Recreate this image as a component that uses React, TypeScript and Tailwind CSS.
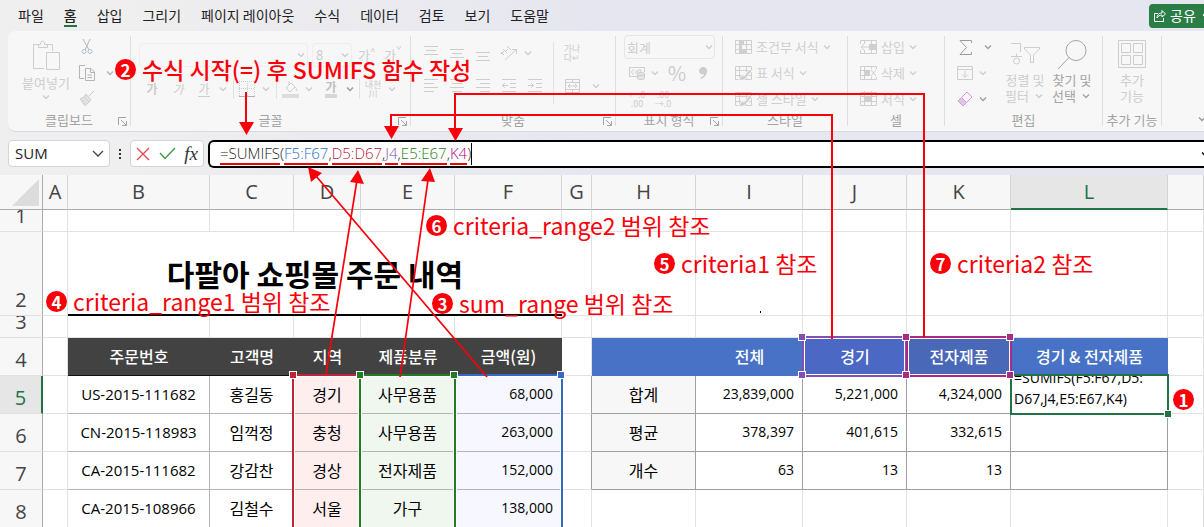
import type { ReactNode } from "react";

const menus = [
  "파일",
  "홈",
  "삽입",
  "그리기",
  "페이지 레이아웃",
  "수식",
  "데이터",
  "검토",
  "보기",
  "도움말",
];

const columns = [
  { name: "A", width: "w-[25px]" },
  { name: "B", width: "w-[142px]" },
  { name: "C", width: "w-[84px]" },
  { name: "D", width: "w-[67px]" },
  { name: "E", width: "w-[94px]" },
  { name: "F", width: "w-[107px]" },
  { name: "G", width: "w-[30px]" },
  { name: "H", width: "w-[104px]" },
  { name: "I", width: "w-[107px]" },
  { name: "J", width: "w-[104px]" },
  { name: "K", width: "w-[104px]" },
  { name: "L", width: "w-[157px]" },
  { name: "", width: "" },
];

const orders = [
  { id: "US-2015-111682", name: "홍길동", area: "경기", kind: "사무용품", price: "68,000" },
  { id: "CN-2015-118983", name: "임꺽정", area: "충청", kind: "사무용품", price: "263,000" },
  { id: "CA-2015-111682", name: "강감찬", area: "경상", kind: "전자제품", price: "152,000" },
  { id: "CA-2015-108966", name: "김철수", area: "서울", kind: "가구", price: "138,000" },
];

const summary = [
  { label: "합계", values: ["23,839,000", "5,221,000", "4,324,000"] },
  { label: "평균", values: ["378,397", "401,615", "332,615"] },
  { label: "개수", values: ["63", "13", "13"] },
];

/* ---------- ribbon ---------- */

function Chevron({ className = "" }: { className?: string }) {
  return (
    <svg
      className={`h-3 w-3 shrink-0 ${className}`}
      viewBox="0 0 12 12"
      fill="none"
      stroke="currentColor"
      strokeWidth={1.3}
    >
      <path d="M3 4.5L6 7.5L9 4.5" />
    </svg>
  );
}

function Icon({
  children,
  className = "h-[18px] w-[18px]",
  box = "0 0 18 18",
}: {
  children: ReactNode;
  className?: string;
  box?: string;
}) {
  return (
    <svg
      className={`shrink-0 ${className}`}
      viewBox={box}
      fill="none"
      stroke="currentColor"
      strokeWidth={1}
    >
      {children}
    </svg>
  );
}

function Tool({
  label,
  children,
  className = "",
}: {
  label: string;
  children: ReactNode;
  className?: string;
}) {
  return (
    <button
      aria-label={label}
      className={`flex h-[22px] w-[26px] shrink-0 items-center justify-center ${className}`}
    >
      {children}
    </button>
  );
}

function Group({
  title,
  width,
  launcher = false,
  children,
}: {
  title: string;
  width: string;
  launcher?: boolean;
  children: ReactNode;
}) {
  return (
    <section
      className={`flex h-[90px] shrink-0 flex-col justify-between border-r border-[#dedede] ${width}`}
    >
      <div className="flex h-[74px]">{children}</div>
      <div className="relative text-center text-[13px] leading-[13px] text-[#a3a3a3]">
        {title}
        {launcher && (
          <button aria-label={`${title} 설정`} className="absolute bottom-0 right-[3px]">
            <Icon className="h-[9px] w-[9px]" box="0 0 9 9">
              <path d="M0.5 8V0.5H8M3 3L8 8M8.5 4V8.5H4" />
            </Icon>
          </button>
        )}
      </div>
    </section>
  );
}

function Rule() {
  return <span className="h-[20px] w-px shrink-0 bg-[#e2e2e2]" />;
}

function Lines({ rows }: { rows: [number, number, number][] }) {
  return (
    <Icon className="h-[16px] w-[14px]" box="0 0 14 16">
      {rows.map(([y, from, to]) => (
        <path key={y} d={`M${from} ${y}.5H${to}`} />
      ))}
    </Icon>
  );
}

function TableIcon({ kind }: { kind: "rule" | "brush" | "insert" | "delete" | "format" }) {
  return (
    <Icon className="h-[16px] w-[17px]" box="0 0 17 16">
      <path d="M0.5 1.5H16.5V14.5H0.5ZM0.5 5.5H16.5M0.5 10.5H16.5M4.5 1.5V14.5M11.5 1.5V14.5" />
      {kind === "rule" && (
        <path fill="currentColor" stroke="none" d="M4 2h5v3H4zM4 6h3v4H4zM4 11h8v3H4z" />
      )}
      {kind === "brush" && (
        <path fill="currentColor" stroke="#f7f7f7" d="M4 15C5 11 7 10 9 11L15 4L17 6L11 13C10 15 7 16 4 15Z" />
      )}
      {kind === "insert" && (
        <>
          <path fill="#f7f7f7" stroke="none" d="M0 5h9v6H0z" />
          <path fill="currentColor" stroke="none" d="M9 6h8v4H9z" />
          <path d="M9 8H1M4 5L1 8L4 11" />
        </>
      )}
      {kind === "delete" && (
        <>
          <path fill="#f7f7f7" stroke="none" d="M9 4h8v8H9z" />
          <path fill="currentColor" stroke="none" d="M4 5h6v6H4z" />
          <path d="M11 5L16 11M16 5L11 11" />
        </>
      )}
      {kind === "format" && (
        <path fill="currentColor" stroke="none" d="M5 6h6v4H5zM4 0h1v3H4zM11 0h1v3h-1z" />
      )}
    </Icon>
  );
}

function StyleRow({
  kind,
  text,
}: {
  kind: "rule" | "brush" | "insert" | "delete" | "format";
  text: string;
}) {
  return (
    <button className="flex h-[22px] items-center text-[13px] text-[#cfcfcf]">
      <TableIcon kind={kind} />
      <span className="ml-1 whitespace-nowrap">{text}</span>
      <Chevron className="ml-[2px]" />
    </button>
  );
}

function Ribbon() {
  return (
    <div className="ml-2 flex h-[101px] overflow-hidden rounded-l-lg border-b border-[#d9d9e2] bg-[#f7f7f7] pt-[5px] text-[#cdcdcd]">
      <Group title="클립보드" width="w-[123px]" launcher>
        <button className="flex w-[76px] flex-col items-center pt-1">
          <Icon className="h-[31px] w-[28px]" box="0 0 28 31">
            <path d="M12 28.5H1.5V4.5H6M15 4.5H20.5V11M6.5 7.5V4.5H8.5C8 0 13 0 12.5 4.5H15.5V7.5Z" />
            <path d="M14.5 12.5H27.5V29.5H14.5Z" />
          </Icon>
          <span className="mt-1 text-[13px] leading-4">붙여넣기</span>
          <Chevron />
        </button>
        <div className="-ml-[10px] flex flex-col gap-1">
          <Tool label="잘라내기">
            <Icon>
              <path d="M5 1L11 12M12 1L7 12" stroke="#b5b5b5" />
              <circle cx="6" cy="13.5" r="2" stroke="#a9c0dc" />
              <circle cx="12" cy="13.5" r="2" stroke="#a9c0dc" />
            </Icon>
          </Tool>
          <div className="flex items-center text-[#b4b4b4]">
            <Tool label="복사">
              <Icon>
                <path d="M6 14.5H1.5V1.5H7M7.5 4.5H13L16.5 8V16.5H7.5ZM12.5 4.5V8.5H16.5M9.5 11H14M9.5 13.5H14" />
              </Icon>
            </Tool>
            <Chevron className="ml-[4px]" />
          </div>
          <Tool label="서식 복사">
            <Icon>
              <path
                d="M16 1L11 6M8 4L13 10L11 12L6 7ZM6 7L2 9L7 16L11 12M4 12L6 10M6 14L8 12"
                fill="#e4e4e4"
              />
            </Icon>
          </Tool>
        </div>
      </Group>

      <Group title="글꼴" width="w-[280px]" launcher>
        <div className="flex flex-col gap-1 pl-2 pt-1">
          <div className="flex h-[30px] items-center">
            <span className="flex h-[24px] w-[169px] items-center justify-end rounded border border-[#eeeeee]">
              <Chevron />
            </span>
            <span className="ml-1 flex h-[24px] w-[40px] items-center justify-between rounded border border-[#eeeeee] pl-[3px] text-[13px]">
              8<Chevron />
            </span>
            <button className="ml-[6px] w-[26px] text-left text-[13px]">
              가<sup>^</sup>
            </button>
            <button className="w-[26px] text-left text-[13px]">
              가<sup>ˇ</sup>
            </button>
          </div>
          <div className="flex h-[30px] items-center text-[12px]">
            <Tool label="굵게">
              <b>가</b>
            </Tool>
            <Tool label="기울임꼴">
              <i>가</i>
            </Tool>
            <Tool label="밑줄">
              <span className="border-b border-current leading-[15px]">가</span>
            </Tool>
            <Chevron />
            <span className="w-1" />
            <Rule />
            <Tool label="테두리">
              <Icon className="h-[16px] w-[16px]" box="0 0 16 16">
                <path strokeDasharray="1 1" d="M0.5 0V15M8.5 0V15M15.5 0V15M0 0.5H16M0 7.5H16" />
                <path d="M0 15.5H16" stroke="#b0b0b0" />
              </Icon>
            </Tool>
            <Chevron />
            <span className="w-1" />
            <Rule />
            <Tool label="채우기 색">
              <Icon className="h-[18px] w-[17px]" box="0 0 17 18">
                <path d="M4 8L9 3L13 7L8 12ZM7 5V1M13 7C15 9 15 11 14 11" />
                <path d="M0 14H17V18H0Z" fill="#dddddd" stroke="none" />
              </Icon>
            </Tool>
            <Chevron />
            <span className="w-[3px]" />
            <Tool label="글꼴 색">
              <span className="border-b-4 border-[#d6d6d6] text-[12px] font-bold leading-[14px] text-[#c0c0c0]">
                가
              </span>
            </Tool>
            <Chevron className="text-[#9a9a9a]" />
            <span className="w-[3px]" />
            <Rule />
            <Tool label="윗주" className="text-[9px] leading-[9px]">
              내천
              <br />川
            </Tool>
            <Chevron />
          </div>
        </div>
      </Group>

      <Group title="맞춤" width="w-[205px]" launcher>
        <div className="flex flex-col gap-[11px] pl-[7px] pt-[6px]">
          <div className="flex items-center">
            <Tool label="위쪽 맞춤">
              <Lines rows={[[1, 0, 14], [5, 2, 12], [9, 0, 14]]} />
            </Tool>
            <Tool label="가운데 맞춤">
              <Lines rows={[[4, 0, 14], [8, 2, 12], [12, 0, 14]]} />
            </Tool>
            <Tool label="아래쪽 맞춤">
              <Lines rows={[[7, 0, 14], [11, 2, 12], [15, 0, 14]]} />
            </Tool>
            <Tool label="방향">
              <Icon>
                <path d="M5 16L16 6M12 5.5H16.5V10M1 8L4 11M3 5L7 9M7 2L11 6M1 10L5 6M8 5L6 7" />
              </Icon>
            </Tool>
            <Chevron />
          </div>
          <div className="flex items-center">
            <Tool label="왼쪽 맞춤">
              <Lines rows={[[1, 0, 14], [5, 0, 10], [9, 0, 14], [13, 0, 10]]} />
            </Tool>
            <Tool label="가운데">
              <Lines rows={[[1, 0, 14], [5, 2, 12], [9, 0, 14], [13, 2, 12]]} />
            </Tool>
            <Tool label="오른쪽 맞춤">
              <Lines rows={[[1, 0, 14], [5, 4, 14], [9, 0, 14], [13, 4, 14]]} />
            </Tool>
            <Tool label="내어쓰기">
              <Icon className="h-[16px] w-[14px]" box="0 0 14 16">
                <path d="M0 1.5H14M8 5.5H14M8 9.5H14M0 13.5H14M6 7.5H0M3 5L0.5 7.5L3 10" />
              </Icon>
            </Tool>
            <Tool label="들여쓰기">
              <Icon className="h-[16px] w-[14px]" box="0 0 14 16">
                <path d="M0 1.5H14M8 5.5H14M8 9.5H14M0 13.5H14M0 7.5H6M3 5L5.5 7.5L3 10" />
              </Icon>
            </Tool>
          </div>
        </div>
        <div className="ml-[5px] mt-[6px] h-[62px] w-px bg-[#e2e2e2]" />
        <div className="flex flex-col gap-[11px] pl-[5px] pt-[6px]">
          <Tool label="자동 줄 바꿈" className="text-[9px] leading-[9px]">
            가나
            <br />
            다↵
          </Tool>
          <div className="flex items-center">
            <Tool label="병합하고 가운데 맞춤">
              <Icon className="h-[14px] w-[15px]" box="0 0 15 14">
                <path d="M0.5 0.5H14.5V13.5H0.5ZM0.5 3.5H14.5M0.5 10.5H14.5M7.5 0.5V3.5M7.5 10.5V13.5M3 7H12M5 5L3 7L5 9M10 5L12 7L10 9" />
              </Icon>
            </Tool>
            <Chevron className="ml-[5px]" />
          </div>
        </div>
      </Group>

      <Group title="표시 형식" width="w-[107px]" launcher>
        <div className="flex flex-col gap-1 pl-2">
          <div className="relative flex h-[22px] items-center">
            <select
              aria-label="표시 형식"
              className="h-[24px] w-[91px] appearance-none rounded border border-[#e6e6e6] bg-transparent pl-[2px] text-[13px] leading-none"
            >
              <option>회계</option>
            </select>
            <Chevron className="pointer-events-none absolute right-[1px] top-[5px]" />
          </div>
          <div className="flex items-center">
            <Tool label="회계 표시 형식">
              <Icon className="h-[14px] w-[17px]" box="0 0 17 14">
                <path d="M8 10.5H0.5V1.5H15.5V6M5 4C2 3 2 9 5 8M7 8V4M9 7V4H12V6" />
                <path fill="#e4e4e4" d="M8.5 7.5C8.5 6 15.5 6 15.5 7.5V12.5C15.5 14 8.5 14 8.5 12.5ZM8.5 9.5H15.5" />
              </Icon>
            </Tool>
            <Chevron className="-ml-px" />
            <Tool label="백분율" className="ml-[3px] text-[20px]">
              %
            </Tool>
            <Tool label="쉼표 스타일">
              <Icon className="h-[14px] w-[10px]" box="0 0 10 14">
                <path
                  fill="currentColor"
                  stroke="none"
                  d="M5 1C8 1 9 3 9 5C9 9 6 12 3 13L2 12C5 11 6 9 6 8C3 9 1 7 1 5C1 3 3 1 5 1Z"
                />
              </Icon>
            </Tool>
          </div>
          <div className="flex text-[9px] leading-[9px]">
            <Tool label="자릿수 늘림">
              ←.0
              <br />
              .00
            </Tool>
            <Tool label="자릿수 줄임">
              .00
              <br />
              →.0
            </Tool>
          </div>
        </div>
      </Group>

      <Group title="스타일" width="w-[125px]">
        <div className="flex flex-col gap-1 pl-3">
          <StyleRow kind="rule" text="조건부 서식" />
          <StyleRow kind="brush" text="표 서식" />
          <StyleRow kind="brush" text="셀 스타일" />
        </div>
      </Group>

      <Group title="셀" width="w-[97px]">
        <div className="flex flex-col gap-1 pl-3">
          <StyleRow kind="insert" text="삽입" />
          <StyleRow kind="delete" text="삭제" />
          <StyleRow kind="format" text="서식" />
        </div>
      </Group>

      <Group title="편집" width="w-[158px]">
        <div className="flex flex-col gap-1 pl-[7px]">
          <div className="flex items-center text-[#9d9d9d]">
            <Tool label="자동 합계">
              <Icon className="h-[15px] w-[13px]" box="0 0 13 15">
                <path d="M12.5 3V0.5H1L7.5 7.5L1 14.5H12.5V12" />
              </Icon>
            </Tool>
            <Chevron className="ml-1" />
          </div>
          <div className="flex items-center">
            <Tool label="채우기">
              <Icon className="h-[14px] w-[16px]" box="0 0 16 14">
                <path d="M0.5 0.5H15.5V13.5H0.5ZM0.5 3.5H15.5M8 5V11M5 8.5L8 11.5L11 8.5" />
              </Icon>
            </Tool>
            <Chevron className="-ml-px" />
          </div>
          <div className="flex items-center text-[#9d9d9d]">
            <Tool label="지우기">
              <Icon className="h-[16px] w-[16px]" box="0 0 16 16">
                <path stroke="#cf9fd4" fill="#fbf2fc" d="M10 1L15 6L6 15L1 10Z" />
                <path stroke="#cf9fd4" fill="#e3c5e6" d="M4.5 6.5L9.5 11.5L6 15L1 10Z" />
              </Icon>
            </Tool>
            <Chevron className="-ml-px" />
          </div>
        </div>
        <button className="ml-[6px] flex w-[50px] flex-col items-center pt-1 text-[13px] leading-4">
          <Icon className="h-[30px] w-[29px]" box="0 0 29 30">
            <path d="M0 3.5H9.5V12M0 16.5H11M5.5 13.5V16" />
            <circle cx="5.5" cy="21" r="3" />
            <path d="M13.5 7.5H28.5V9L22.5 15V22.5H19.5V15L13.5 9Z" />
          </Icon>
          <span className="mt-[2px] whitespace-nowrap">정렬 및</span>
          <span className="flex items-center">
            필터
            <Chevron className="ml-1" />
          </span>
        </button>
        <button className="-ml-[3px] flex w-[50px] flex-col items-center pt-1 text-[13px] leading-4 text-[#a3a3a3]">
          <Icon className="h-[30px] w-[30px]" box="0 0 30 30">
            <circle cx="19" cy="10.5" r="10" />
            <path d="M12 17.5L1 29" />
          </Icon>
          <span className="mt-[2px] whitespace-nowrap">찾기 및</span>
          <span className="flex items-center">
            선택
            <Chevron className="ml-1" />
          </span>
        </button>
      </Group>

      <Group title="추가 기능" width="w-[59px]">
        <button className="flex w-full flex-col items-center pt-1 text-[13px] leading-4">
          <Icon className="h-[28px] w-[28px]" box="0 0 28 28">
            <path d="M0.5 0.5H27.5V27.5H0.5ZM3.5 3.5H12.5V12.5H3.5ZM15.5 3.5H24.5V12.5H15.5ZM3.5 15.5H12.5V24.5H3.5ZM15.5 15.5H24.5V24.5H15.5Z" />
          </Icon>
          <span className="mt-1">추가</span>
          <span>기능</span>
        </button>
      </Group>
      <div className="ml-auto flex items-end pb-[6px]">
        <button aria-label="리본 접기" className="-mr-1 text-[#9a9a9a]">
          <Chevron />
        </button>
      </div>
    </div>
  );
}

/* ---------- formula bar ---------- */

function FormulaBar() {
  return (
    <div className="flex h-[43px] items-center pl-2">
      <div className="flex h-[27px] w-[102px] shrink-0 items-center rounded border border-[#d4d4d4] bg-white">
        <input
          aria-label="이름 상자"
          defaultValue="SUM"
          className="w-[82px] bg-transparent pl-[6px] font-['Open_Sans',sans-serif] text-[15px] text-[#222] outline-none"
        />
        <button aria-label="이름 목록" className="text-[#444]">
          <svg className="h-4 w-4" viewBox="0 0 16 16" fill="none" stroke="currentColor" strokeWidth={1.3}>
            <path d="M2 5L7 10L12 5" />
          </svg>
        </button>
      </div>
      <svg className="mx-[8px] h-3 w-[4px] shrink-0" viewBox="0 0 4 12" fill="#333">
        <path d="M1 1H3V3H1ZM1 5H3V7H1ZM1 9H3V11H1Z" />
      </svg>
      <div className="flex h-[27px] w-[74px] shrink-0 items-center justify-between rounded border border-[#d4d4d4] bg-white px-[5px]">
        <button aria-label="취소">
          <svg className="h-[14px] w-[14px]" viewBox="0 0 14 14" stroke="#e0474c" strokeWidth={1.3}>
            <path d="M1 1L13 13M13 1L1 13" />
          </svg>
        </button>
        <button aria-label="입력">
          <svg className="h-[13px] w-[17px]" viewBox="0 0 17 13" fill="none" stroke="#3f9b4b" strokeWidth={1.4}>
            <path d="M1 6L6 11.5L16 1" />
          </svg>
        </button>
        <button
          aria-label="함수 삽입"
          className="font-['Liberation_Serif',serif] text-[19px] italic leading-none text-[#333]"
        >
          fx
        </button>
      </div>
      <div className="ml-[4px] flex h-[28px] flex-1 items-center justify-between overflow-hidden rounded-l-md border-2 border-r-0 border-black bg-white pl-[10px]">
        <div
          role="textbox"
          aria-label="수식 입력줄"
          contentEditable
          suppressContentEditableWarning
          className="flex border-r border-black font-['Open_Sans',sans-serif] text-[15px] font-light leading-[20px] text-[#222] outline-none"
        >
          <span className="border-b-2 border-[#f00000]">=SUMIFS</span>
          <span>(</span>
          <span className="border-b-2 border-[#f00000] text-[#1f6ec4]">F5:F67</span>
          <span>,</span>
          <span className="border-b-2 border-[#f00000] text-[#b8203a]">D5:D67</span>
          <span>,</span>
          <span className="border-b-2 border-[#f00000] text-[#7e4fb3]">J4</span>
          <span>,</span>
          <span className="border-b-2 border-[#f00000] text-[#2a7a1a]">E5:E67</span>
          <span>,</span>
          <span className="border-b-2 border-[#f00000] text-[#b3008c]">K4</span>
          <span>)</span>
        </div>
        <Chevron className="-mr-[7px]" />
      </div>
    </div>
  );
}

/* ---------- sheet ---------- */

function RowHead({ n, active = false, short = false }: { n: number; active?: boolean; short?: boolean }) {
  return (
    <th
      scope="row"
      className={`border-b border-b-[#e0e0e0] p-0 align-bottom font-normal ${
        active
          ? "border-r-2 border-r-[#217346] bg-[#e6e6e6] text-[#217346]"
          : "border-r border-r-[#ababab] bg-[#f7f7f7] text-[#444]"
      }`}
    >
      <div
        className={`flex items-end justify-center overflow-hidden pb-[2px] font-['Open_Sans',sans-serif] text-[20px] leading-[26px] ${
          short ? "h-[21px]" : "h-[30px]"
        }`}
      >
        {n}
      </div>
    </th>
  );
}

const grid = "border-b border-r border-[#e2e2e2] p-0";
const dataCell = "border-b border-r border-[#b4b4b4] p-0 pb-[2px] text-center leading-5";
const numberCell =
  "border-b border-r p-0 pb-[2px] pr-2 text-right font-['Open_Sans',sans-serif] text-[14px] leading-5";
const orderHead =
  "border-b border-[#111] bg-[#424242] p-0 pb-[2px] text-center text-[16px] font-medium leading-5 text-white";
const sumHead = "border-b p-0 pb-[2px] text-center text-[16px] font-medium leading-5 text-white";

function Blank({ count }: { count: number }) {
  return (
    <>
      {Array.from({ length: count }, (_, i) => (
        <td key={i} className={grid} />
      ))}
    </>
  );
}

function Sheet() {
  return (
    <table className="w-full table-fixed border-separate border-spacing-0 bg-white text-black">
      <colgroup>
        <col className="w-[43px]" />
        {columns.map((c, i) => (
          <col key={i} className={c.width} />
        ))}
      </colgroup>
      <thead>
        <tr className="h-[35px]">
          <td className="border-b border-r border-[#ababab] bg-[#f7f7f7] p-0">
            <svg className="ml-auto mr-[3px] h-[27px] w-[27px]" viewBox="0 0 27 27">
              <path d="M27 0V27H0Z" fill="#dcdcdc" />
            </svg>
          </td>
          {columns.map((c, i) => (
            <th
              key={i}
              scope="col"
              className={`border-r border-r-[#d4d4d4] p-0 text-center font-['Open_Sans',sans-serif] text-[20px] font-normal leading-8 ${
                c.name === "L"
                  ? "border-b-2 border-b-[#217346] bg-[#e6e6e6] text-[#217346]"
                  : "border-b border-b-[#ababab] bg-[#f7f7f7] text-[#444]"
              }`}
            >
              {c.name}
            </th>
          ))}
        </tr>
      </thead>
      <tbody>
        <tr className="h-[22px]">
          <RowHead n={1} short />
          <Blank count={13} />
        </tr>
        <tr className="h-[84px]">
          <RowHead n={2} />
          <Blank count={1} />
          <td
            colSpan={5}
            className="border-b-2 border-black p-0 text-center text-[30px] font-bold leading-10"
          >
            다팔아 쇼핑몰 주문 내역
          </td>
          <Blank count={7} />
        </tr>
        <tr className="h-[22px]">
          <RowHead n={3} short />
          <Blank count={13} />
        </tr>
        <tr className="h-[38px]">
          <RowHead n={4} />
          <Blank count={1} />
          <td className={orderHead}>주문번호</td>
          <td className={orderHead}>고객명</td>
          <td className={orderHead}>지역</td>
          <td className={orderHead}>제품분류</td>
          <td className={orderHead}>금액(원)</td>
          <Blank count={1} />
          <td className={`${sumHead} border-[#4872c6] bg-[#4872c6]`} />
          <td className={`${sumHead} border-[#4872c6] bg-[#4872c6]`}>전체</td>
          <td className={`${sumHead} border-[#4a68c4] bg-[#4a68c4]`}>경기</td>
          <td className={`${sumHead} border-[#4a68b8] bg-[#4a68b8]`}>전자제품</td>
          <td className={`${sumHead} border-[#4872c6] bg-[#4872c6]`}>경기 &amp; 전자제품</td>
          <Blank count={1} />
        </tr>
        {orders.map((order, i) => {
          const sum = summary[i];
          return (
            <tr key={i} className="h-[38px]">
              <RowHead n={i + 5} active={i === 0} />
              <Blank count={1} />
              <td className={`${dataCell} font-['Open_Sans',sans-serif] text-[15px]`}>{order.id}</td>
              <td className={`${dataCell} text-[16px]`}>{order.name}</td>
              <td className={`${dataCell} bg-[#ffeeee] text-[16px]`}>{order.area}</td>
              <td className={`${dataCell} bg-[#eff7ef] text-[16px]`}>{order.kind}</td>
              <td className={`${numberCell} border-[#b4b4b4] bg-[#f6f7ff]`}>{order.price}</td>
              {sum ? (
                <>
                  <td className="border-b border-r border-b-[#e2e2e2] border-r-[#9f9f9f] p-0" />
                  <td className="border-b border-r border-[#9f9f9f] bg-[#f7f7f7] p-0 pb-[2px] text-center text-[16px] leading-5">
                    {sum.label}
                  </td>
                  {sum.values.map((value, k) => (
                    <td key={k} className={`${numberCell} border-[#9f9f9f]`}>
                      {value}
                    </td>
                  ))}
                  <td className="border-b border-r border-[#9f9f9f] p-0">
                    {i === 0 && (
                      <div className="flex h-[37px] items-end overflow-hidden pb-1 pl-[3px] font-['Open_Sans',sans-serif] text-[14px] leading-[21px]">
                        <span>
                          =SUMIFS(F5:F67,D5:
                          <br />
                          D67,J4,E5:E67,K4)
                        </span>
                      </div>
                    )}
                  </td>
                  <Blank count={1} />
                </>
              ) : (
                <Blank count={7} />
              )}
            </tr>
          );
        })}
      </tbody>
    </table>
  );
}

/* ---------- range outlines and callouts, drawn over the sheet ---------- */

function Handle({ className }: { className: string }) {
  return <span className={`absolute h-[8px] w-[8px] border border-white ${className}`} />;
}

function Ranges() {
  return (
    <div className="pointer-events-none">
      <div className="absolute left-[292px] top-[374px] h-[160px] w-[69px] border-2 border-[#be2437] ring-1 ring-inset ring-white" />
      <div className="absolute left-[454px] top-[374px] h-[160px] w-[109px] border-2 border-[#3767c6] ring-1 ring-inset ring-white" />
      <div className="absolute left-[359px] top-[374px] h-[160px] w-[97px] border-2 border-[#237b23] ring-1 ring-inset ring-white" />
      <div className="absolute left-[802px] top-[336px] h-[41px] w-[105px] border-2 border-[#8450b4] ring-1 ring-inset ring-white" />
      <div className="absolute left-[906px] top-[336px] h-[41px] w-[106px] border-2 border-[#a92c84] ring-1 ring-inset ring-white" />
      <div className="absolute left-[1010px] top-[374px] h-[41px] w-[159px] border-2 border-[#217346]" />
      <Handle className="left-[289px] top-[371px] bg-[#be2437]" />
      <Handle className="left-[356px] top-[371px] bg-[#237b23]" />
      <Handle className="left-[450px] top-[371px] bg-[#237b23]" />
      <Handle className="left-[557px] top-[371px] bg-[#3767c6]" />
      <Handle className="left-[798px] top-[333px] bg-[#8450b4]" />
      <Handle className="left-[798px] top-[371px] bg-[#8450b4]" />
      <Handle className="left-[902px] top-[333px] bg-[#a92c84]" />
      <Handle className="left-[902px] top-[371px] bg-[#a92c84]" />
      <Handle className="left-[1006px] top-[333px] bg-[#a92c84]" />
      <Handle className="left-[1006px] top-[371px] bg-[#a92c84]" />
      <Handle className="left-[1164px] top-[410px] bg-[#217346]" />
      <span className="absolute left-[760px] top-[311px] h-[2px] w-px bg-black" />
    </div>
  );
}

function Arrows() {
  return (
    <svg
      className="pointer-events-none absolute left-0 top-0 h-[527px] w-[1204px]"
      viewBox="0 0 1204 527"
      fill="none"
      stroke="#fa0008"
      strokeWidth={2}
    >
      <path d="M246 92V124M391 128V115H832V339M455 130V94H924V338" />
      <path d="M487 377L316 176M326 374L357 180M400 377L428 180" strokeWidth={1.7} />
      <g fill="#fa0008" stroke="none">
        <path d="M239 122H254L246.5 135ZM384 126H399L391.5 139ZM448 128H463L455.5 141Z" />
        <path d="M308 167L322 173L311 182ZM358 170L364 184L350 182ZM430 168L435 182L421 181Z" />
      </g>
    </svg>
  );
}

function Callout({
  n,
  className,
  children,
}: {
  n: number;
  className: string;
  children?: ReactNode;
}) {
  return (
    <div
      className={`pointer-events-none absolute flex h-[30px] items-center gap-[6px] whitespace-nowrap text-[23px] text-[#fa0008] ${className}`}
    >
      <span className="flex h-[21px] w-[21px] items-center justify-center rounded-full bg-[#fa0008] text-[17px] font-bold leading-none text-white">
        {n}
      </span>
      {children}
    </div>
  );
}

export default function App() {
  return (
    <main className="relative h-screen overflow-hidden bg-linear-to-r from-[#efefef] from-10% to-[#e6e6f0] to-50% font-['Noto_Sans_CJK_KR',sans-serif]">
      <header className="flex h-[31px] items-center">
        <nav className="flex gap-5 whitespace-nowrap pl-[18px] text-[14px] leading-5 text-[#222]">
          {menus.map((menu) => (
            <a
              key={menu}
              href="#"
              className={
                menu === "홈"
                  ? "border-b-2 border-[#217346] font-medium"
                  : "border-b-2 border-transparent"
              }
            >
              {menu}
            </a>
          ))}
        </nav>
        <button className="ml-auto flex h-6 w-[55px] items-center gap-1 overflow-hidden rounded-l bg-[#2a7d44] pl-[5px] text-[14px] text-white">
          <Icon className="h-[13px] w-[12px]" box="0 0 12 13">
            <path d="M4 4.5H0.5V12.5H9.5V9M3 9C3 5 6 4 8 4V1.5L11.5 5L8 8V6C6 6 4 7 3 9Z" />
          </Icon>
          <span className="whitespace-nowrap">공유</span>
          <Chevron />
        </button>
      </header>
      <Ribbon />
      <FormulaBar />
      <Sheet />

      <Ranges />
      <Arrows />
      <Callout n={1} className="left-[1173px] top-[384px]" />
      <Callout n={2} className="left-[115px] top-[54px] font-medium">
        수식 시작(=) 후 SUMIFS 함수 작성
      </Callout>
      <Callout n={3} className="left-[432px] top-[288px]">
        sum_range 범위 참조
      </Callout>
      <Callout n={4} className="left-[46px] top-[286px]">
        criteria_range1 범위 참조
      </Callout>
      <Callout n={5} className="left-[654px] top-[248px]">
        criteria1 참조
      </Callout>
      <Callout n={6} className="left-[426px] top-[210px]">
        criteria_range2 범위 참조
      </Callout>
      <Callout n={7} className="left-[930px] top-[248px]">
        criteria2 참조
      </Callout>
    </main>
  );
}
